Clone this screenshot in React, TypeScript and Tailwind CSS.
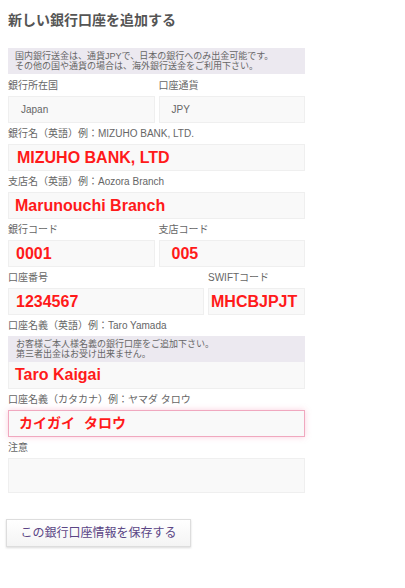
const font = "font-['Liberation_Sans','Noto_Sans_CJK_JP',sans-serif]";

const Label = ({ children }: { children: React.ReactNode }) => (
  <div className="pt-[4px] pb-[3px] text-[10px] leading-[14px] text-[#666]">{children}</div>
);

const Field = ({
  value,
  red = false,
  pad = 'pl-[8px]',
  className = '',
}: {
  value?: React.ReactNode;
  red?: boolean;
  pad?: string;
  className?: string;
}) => (
  <div
    className={`flex h-[27px] items-center border border-[#efefef] bg-[#f9f9f9] ${pad} ${
      red ? 'text-[16px] font-bold text-[#ff1a1a]' : 'text-[10px] text-[#666]'
    } ${className}`}
  >
    {value}
  </div>
);

export default function App() {
  return (
    <div className={`min-h-screen bg-white px-[8px] pt-[10px] ${font}`}>
      <div className="w-[297px]">
        <h1 className="text-[14px] font-bold leading-[20px] text-[#555]">新しい銀行口座を追加する</h1>

        <div className="mt-[18px] bg-[#ece9f0] px-[7px] py-[3px] text-[9px] leading-[10px] text-[#666]">
          国内銀行送金は、通貨JPYで、日本の銀行へのみ出金可能です。
          <br />
          その他の国や通貨の場合は、海外銀行送金をご利用下さい。
        </div>

        <div className="mt-[1px] grid grid-cols-2 gap-x-[4px]">
          <div>
            <Label>銀行所在国</Label>
            <Field value="Japan" pad="pl-[12px]" />
          </div>
          <div>
            <Label>口座通貨</Label>
            <Field value="JPY" pad="pl-[12px]" />
          </div>
        </div>

        <Label>銀行名（英語）例：MIZUHO BANK, LTD.</Label>
        <Field value="MIZUHO BANK, LTD" red />

        <Label>支店名（英語）例：Aozora Branch</Label>
        <Field value="Marunouchi Branch" red pad="pl-[6px]" />

        <div className="grid grid-cols-2 gap-x-[4px]">
          <div>
            <Label>銀行コード</Label>
            <Field value="0001" red pad="pl-[7px]" />
          </div>
          <div>
            <Label>支店コード</Label>
            <Field value="005" red pad="pl-[12px]" />
          </div>
        </div>

        <div className="grid grid-cols-[196px_1fr] gap-x-[4px]">
          <div>
            <Label>口座番号</Label>
            <Field value="1234567" red pad="pl-[7px]" />
          </div>
          <div>
            <Label>SWIFTコード</Label>
            <Field value="MHCBJPJT" red pad="pl-[2px]" />
          </div>
        </div>

        <Label>口座名義（英語）例：Taro Yamada</Label>
        <div className="bg-[#ece9f0] px-[8px] py-[3px] text-[9px] leading-[10px] text-[#666]">
          お客様ご本人様名義の銀行口座をご追加下さい。
          <br />
          第三者出金はお受け出来ません。
        </div>
        <Field value="Taro Kaigai" red pad="pl-[6px]" className="border-t-0" />

        <Label>口座名義（カタカナ）例：ヤマダ タロウ</Label>
        <Field
          value={
            <span className="text-[14px]">
              カイガイ<span className="ml-[9px]">タロウ</span>
            </span>
          }
          red
          pad="pl-[10px]"
          className="!border-[#f0a8bf] shadow-[0_0_6px_rgba(240,120,160,0.35)]"
        />

        <Label>注意</Label>
        <div className="h-[35px] border border-[#efefef] bg-[#f9f9f9]" />

        <button className="mt-[26px] -ml-[2px] h-[28px] w-[185px] border border-[#ddd] bg-gradient-to-b from-white to-[#f4f4f4] text-[12px] text-[#5a4585] shadow-[0_1px_2px_rgba(0,0,0,0.15)]">
          この銀行口座情報を保存する
        </button>
      </div>
    </div>
  );
}
